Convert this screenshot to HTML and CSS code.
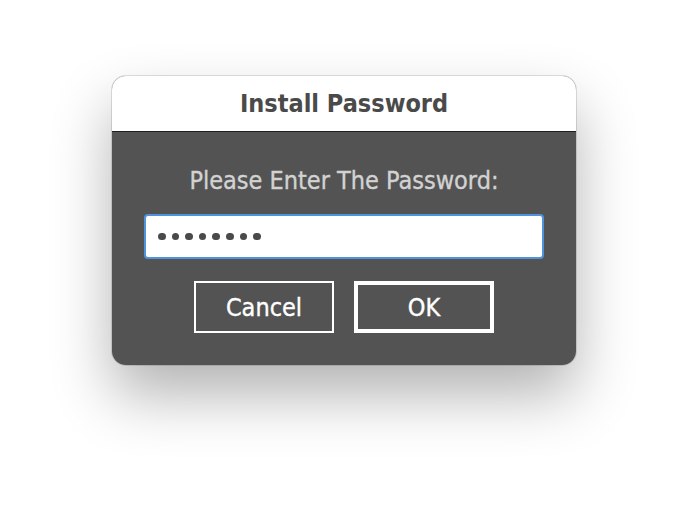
FILE: index.html
```html
<!DOCTYPE html>
<html lang="en">
<head>
<meta charset="utf-8">
<title>Install Password</title>
<link rel="stylesheet" href="styles.css">
</head>
<body>
<div class="stage">
  <div class="dialog" role="dialog" aria-labelledby="dlg-title">
    <div class="titlebar"><h1 id="dlg-title" class="title">Install Password</h1></div>
    <div class="content">
      <label class="prompt" for="pw">Please Enter The Password:</label>
      <div class="field" id="pw" role="textbox" aria-label="Password">
        <span class="dot"></span><span class="dot"></span><span class="dot"></span><span class="dot"></span><span class="dot"></span><span class="dot"></span><span class="dot"></span><span class="dot"></span>
      </div>
      <div class="buttons">
        <button class="btn" type="button">Cancel</button>
        <button class="btn btn-default" type="button">OK</button>
      </div>
    </div>
  </div>
</div>
</body>
</html>
```
FILE: styles.css
```css
html, body {
  margin: 0;
  padding: 0;
  background: #ffffff;
}
body {
  width: 688px;
  height: 514px;
  overflow: hidden;
  font-family: "DejaVu Sans Condensed", "DejaVu Sans", sans-serif;
}
.stage {
  padding: 76px 0 0 112px;
}
.dialog {
  width: 464px;
  height: 289px;
  border-radius: 14px;
  overflow: hidden;
  background: #535353;
  box-shadow: 0 30px 60px rgba(0, 0, 0, 0.3), 0 0 0 1px rgba(0, 0, 0, 0.12);
  display: flex;
  flex-direction: column;
}
.titlebar {
  height: 55px;
  background: #ffffff;
  border-bottom: 1px solid #1f1f1f;
  display: flex;
  align-items: center;
  justify-content: center;
}
.title {
  margin: 0;
  font-size: 25px;
  font-weight: bold;
  color: #4a4a4a;
  line-height: 29px;
}
.content {
  flex: 1;
  display: flex;
  flex-direction: column;
  align-items: center;
  padding-top: 34px;
}
.prompt {
  font-size: 25px;
  line-height: 29px;
  color: #d2d2d2;
  -webkit-text-stroke: 0.35px currentColor;
}
.field {
  margin-top: 19px;
  width: 400px;
  height: 45px;
  box-sizing: border-box;
  background: #ffffff;
  border: 2px solid #4f93dc;
  border-radius: 4px;
  display: flex;
  align-items: center;
  gap: 6px;
  padding-left: 12px;
}
.dot {
  width: 7.6px;
  height: 7.6px;
  border-radius: 50%;
  background: #4a4a4a;
}
.buttons {
  margin-top: 22px;
  display: flex;
  gap: 20px;
}
.btn {
  width: 140px;
  height: 52px;
  box-sizing: border-box;
  background: #535353;
  border: 2px solid #ffffff;
  border-radius: 0;
  color: #ffffff;
  font-family: inherit;
  font-size: 25px;
  padding: 0;
  -webkit-text-stroke: 0.35px currentColor;
}
.btn-default {
  border-width: 4px;
}
```
